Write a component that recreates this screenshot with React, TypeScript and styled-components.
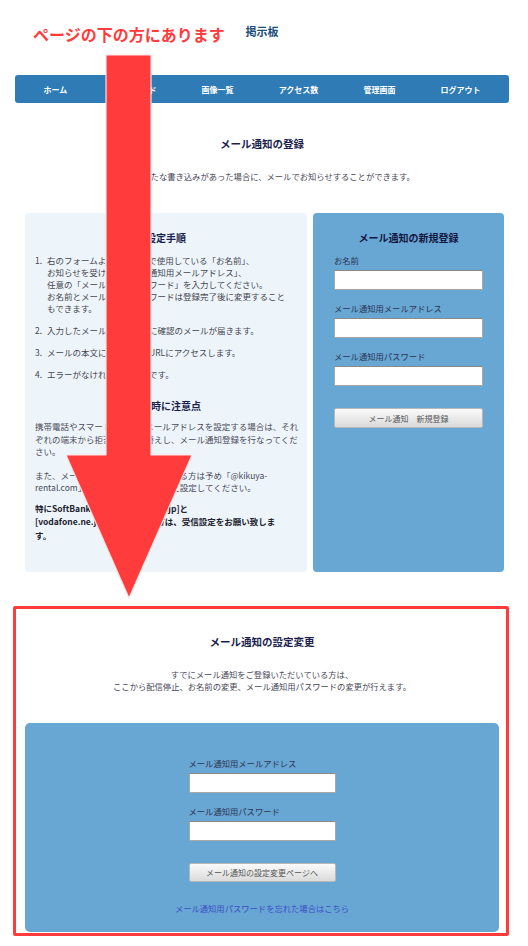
import * as React from 'react'
import styled, { createGlobalStyle } from 'styled-components'

const GlobalStyle = createGlobalStyle`
  html, body {
    margin: 0;
    padding: 0;
    background: #fff;
  }
  body {
    font-family: 'Noto Sans CJK JP', 'Noto Sans', sans-serif;
    color: #45454f;
  }
  * {
    box-sizing: border-box;
  }
`

const navItems = ['ホーム', 'パスワード', '画像一覧', 'アクセス数', '管理画面', 'ログアウト']

const steps = [
  [
    '右のフォームより、掲示板で使用している「お名前」、',
    'お知らせを受け取るメール通知用メールアドレス」、',
    '任意の「メール通知用パスワード」を入力してください。',
    'お名前とメール通知用パスワードは登録完了後に変更すること',
    'もできます。',
  ],
  ['入力したメールアドレス宛に確認のメールが届きます。'],
  ['メールの本文に記載されたURLにアクセスします。'],
  ['エラーがなければ登録完了です。'],
]

const notes = [
  {
    strong: false,
    lines: [
      '携帯電話やスマートフォンでメールアドレスを設定する場合は、それ',
      'ぞれの端末から拒否設定を切替えし、メール通知登録を行なってくだ',
      'さい。',
    ],
  },
  {
    strong: false,
    lines: [
      'また、メール通知を携帯電話で受信する方は予め「@kikuya-',
      'rental.com」からメールが届くように設定してください。',
    ],
  },
  {
    strong: true,
    lines: [
      '特にSoftBank携帯で[@softbank.jp]と',
      '[vodafone.ne.jp]を使用される方は、受信設定をお願い致しま',
      'す。',
    ],
  },
]

export default function App() {
  return (
    <Page>
      <GlobalStyle />
      <SiteTitle>掲示板</SiteTitle>
      <Nav>
        {navItems.map(item => (
          <NavItem key={item}>{item}</NavItem>
        ))}
      </Nav>

      <SectionTitle>メール通知の登録</SectionTitle>
      <Lead>掲示板に新たな書き込みがあった場合に、メールでお知らせすることができます。</Lead>

      <Panels>
        <GuidePanel>
          <PanelTitle>設定手順</PanelTitle>
          <Steps>
            {steps.map((lines, i) => (
              <Step key={i}>
                <StepNum>{i + 1}.</StepNum>
                <StepText>
                  {lines.map((line, j) => (
                    <Line key={j}>{line}</Line>
                  ))}
                </StepText>
              </Step>
            ))}
          </Steps>
          <PanelTitle $gap={19}>登録時に注意点</PanelTitle>
          {notes.map((note, i) => (
            <Note key={i} $strong={note.strong} $first={i === 0}>
              {note.lines.map((line, j) => (
                <Line key={j}>{line}</Line>
              ))}
            </Note>
          ))}
        </GuidePanel>

        <FormPanel>
          <PanelTitle $dark>メール通知の新規登録</PanelTitle>
          <Field $first>
            <FieldLabel>お名前</FieldLabel>
            <TextInput type='text' />
          </Field>
          <Field>
            <FieldLabel>メール通知用メールアドレス</FieldLabel>
            <TextInput type='text' />
          </Field>
          <Field>
            <FieldLabel>メール通知用パスワード</FieldLabel>
            <TextInput type='password' />
          </Field>
          <GrayButton type='button'>メール通知　新規登録</GrayButton>
        </FormPanel>
      </Panels>

      <Highlighted>
        <SectionTitle $top={0}>メール通知の設定変更</SectionTitle>
        <Lead>
          すでにメール通知をご登録いただいている方は、
          <br />
          ここから配信停止、お名前の変更、メール通知用パスワードの変更が行えます。
        </Lead>
        <ChangeBox>
          <ChangeForm>
            <Field $first>
              <FieldLabel>メール通知用メールアドレス</FieldLabel>
              <TextInput type='text' />
            </Field>
            <Field>
              <FieldLabel>メール通知用パスワード</FieldLabel>
              <TextInput type='password' />
            </Field>
            <GrayButton type='button' $h={19}>
              メール通知の設定変更ページへ
            </GrayButton>
          </ChangeForm>
          <ForgotLink href='#'>メール通知用パスワードを忘れた場合はこちら</ForgotLink>
        </ChangeBox>
      </Highlighted>

      <Callout>ページの下の方にあります</Callout>
      <Arrow viewBox='0 0 528 946' width='528' height='946'>
        <path
          d='M106 55 H151 V455 H192 L129 598 L66 455 H106 Z'
          fill='#ff3b3c'
          stroke='#ffe3e3'
          strokeWidth='1.2'
          strokeLinejoin='miter'
        />
      </Arrow>
    </Page>
  )
}

const Page = styled.div`
  position: relative;
  width: 528px;
  min-height: 946px;
  padding: 24px 19px 9px 15px;
  overflow: hidden;
`

const SiteTitle = styled.h1`
  margin: 0;
  font-size: 11px;
  line-height: 14px;
  font-weight: 700;
  color: #1b4d78;
  text-align: center;
`

const Nav = styled.nav`
  margin-top: 37px;
  height: 28px;
  display: grid;
  grid-template-columns: repeat(6, 1fr);
  padding-right: 8px;
  background: #2e7bb6;
  border-radius: 3px;
`

const NavItem = styled.a`
  display: flex;
  align-items: center;
  justify-content: center;
  color: #fff;
  font-size: 8px;
  font-weight: 700;
  white-space: nowrap;
`

const SectionTitle = styled.h2<{ $top?: number }>`
  margin: ${p => (p.$top ?? 34)}px 0 0;
  font-size: 10.5px;
  line-height: 14px;
  font-weight: 700;
  color: #1c1f4d;
  text-align: center;
`

const Lead = styled.p`
  margin: 19px 0 0;
  font-size: 8.3px;
  line-height: 12px;
  color: #484858;
  text-align: center;
  white-space: nowrap;
`

const Panels = styled.div`
  margin: 31px 5px 0 10px;
  display: flex;
  gap: 6px;
  min-height: 359px;
`

const GuidePanel = styled.section`
  width: 282px;
  padding: 18px 10px 20px;
  background: #edf5fa;
  border-radius: 4px;
`

const FormPanel = styled.section`
  flex: 1;
  padding: 18px 21px 20px;
  background: #68a6d3;
  border-radius: 4px;
`

const PanelTitle = styled.h3<{ $gap?: number; $dark?: boolean }>`
  margin: ${p => p.$gap ?? 0}px 0 0;
  font-size: 10px;
  line-height: 14px;
  font-weight: 700;
  color: ${p => (p.$dark ? '#14173f' : '#1c1f4d')};
  text-align: center;
`

const Steps = styled.ol`
  list-style: none;
  margin: 9px 0 0;
  padding: 0;
`

const Step = styled.li`
  display: flex;
  font-size: 8.5px;
  line-height: 12px;
  & + & {
    margin-top: 10px;
  }
`

const StepNum = styled.span`
  width: 12px;
  flex: none;
`

const StepText = styled.div`
  flex: 1;
`

const Line = styled.span`
  display: block;
  white-space: nowrap;
`

const Note = styled.p<{ $strong: boolean; $first: boolean }>`
  margin: ${p => (p.$first ? 7 : p.$strong ? 8 : 11)}px 0 0;
  font-size: 8.5px;
  line-height: ${p => (p.$strong ? 13.5 : 12.5)}px;
  font-weight: ${p => (p.$strong ? 700 : 400)};
  color: ${p => (p.$strong ? '#22222e' : '#4a4a58')};
`

const Field = styled.div<{ $first?: boolean }>`
  margin-top: ${p => (p.$first ? 9 : 12)}px;
`

const FieldLabel = styled.label`
  display: block;
  margin-bottom: 4px;
  font-size: 8.3px;
  line-height: 12px;
  color: #2b3552;
  white-space: nowrap;
`

const TextInput = styled.input`
  display: block;
  width: 100%;
  height: 20px;
  margin: 0;
  padding: 0 4px;
  background: #fff;
  border: 1px solid #a8a8a8;
  border-top-color: #8a8a8a;
  border-radius: 1px;
  outline: none;
`

const GrayButton = styled.button<{ $h?: number }>`
  display: block;
  width: 100%;
  height: ${p => p.$h ?? 20}px;
  margin-top: 22px;
  padding: 0;
  font-family: inherit;
  font-size: 8px;
  color: #555;
  background: linear-gradient(#fbfbfb, #dadada);
  border: 1px solid #b8b8b8;
  border-radius: 2px;
  white-space: nowrap;
`

const Highlighted = styled.section`
  margin: 34px 0 0 -2px;
  padding: 26px 7px 1px 9px;
  border: 3px solid #ff3b3c;
  border-radius: 2px;
`

const ChangeBox = styled.div`
  margin-top: 31px;
  padding: 25px 0 18px;
  display: flex;
  flex-direction: column;
  align-items: center;
  background: #68a6d3;
  border-radius: 5px;
`

const ChangeForm = styled.div`
  width: 147px;
`

const ForgotLink = styled.a`
  margin-top: 20px;
  font-size: 8.3px;
  line-height: 12px;
  color: #3d4fc6;
  text-decoration: none;
  white-space: nowrap;
`

const Callout = styled.div`
  position: absolute;
  left: 33px;
  top: 24px;
  font-size: 16px;
  line-height: 20px;
  font-weight: 700;
  color: #ff3b3c;
  white-space: nowrap;
`

const Arrow = styled.svg`
  position: absolute;
  left: 0;
  top: 0;
  pointer-events: none;
`
